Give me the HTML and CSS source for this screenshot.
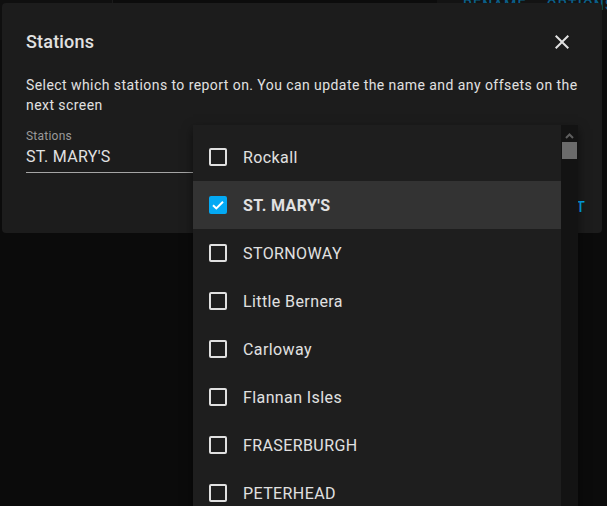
FILE: index.html
```html
<!DOCTYPE html>
<html lang="en">

<head>
    <meta charset="UTF-8" />
    <meta name="viewport" content="width=device-width, initial-scale=1.0" />
    <title>Stations</title>
    <link rel="stylesheet" href="styles.css">
</head>

<body>

    <!-- page behind the dialog, dimmed by the scrim -->
    <div class="page">
        <div class="page-bar">
            <div class="bar-left"></div>
            <div class="bar-mid"></div>
            <div class="bar-right">
                <span class="bar-btn">Rename</span>
                <span class="bar-btn">Options</span>
            </div>
        </div>
    </div>

    <div class="dialog">
        <div class="dialog-head">
            <h2 class="dialog-title">Stations</h2>
            <button class="close-btn" aria-label="Close">
                <svg width="24" height="24" viewBox="0 0 24 24">
                    <path d="M19 6.41 17.59 5 12 10.59 6.41 5 5 6.41 10.59 12 5 17.59 6.41 19 12 13.41 17.59 19 19 17.59 13.41 12z" fill="#e1e1e1" />
                </svg>
            </button>
        </div>
        <p class="dialog-text">Select which stations to report on. You can update the name and any offsets on the next screen</p>

        <div class="field">
            <label class="field-label">Stations</label>
            <div class="field-value">ST. MARY'S</div>
        </div>

        <div class="dialog-actions">
            <button class="text-btn">Next</button>
        </div>
    </div>

    <div class="menu">
        <ul class="menu-list" id="menu-list"></ul>
        <div class="scrollbar">
            <svg class="scroll-up" width="15" height="12" viewBox="0 0 15 12">
                <path d="M4 8 7.5 4.5 11 8" fill="none" stroke="#5e5e5e" stroke-width="2" />
            </svg>
            <div class="scroll-thumb"></div>
        </div>
    </div>

    <script>
        const stations = [
            ["Rockall", false],
            ["ST. MARY'S", true],
            ["STORNOWAY", false],
            ["Little Bernera", false],
            ["Carloway", false],
            ["Flannan Isles", false],
            ["FRASERBURGH", false],
            ["PETERHEAD", false],
            ["Wick", false],
        ];

        const list = document.querySelector("#menu-list");

        const tick = '<svg width="18" height="18" viewBox="0 0 18 18"><path d="M4 9.2 7.3 12.4 14 5.7" fill="none" stroke="#fff" stroke-width="2" /></svg>';

        stations.forEach(([name, checked]) => {
            let li = document.createElement("li");
            li.className = checked ? "item selected" : "item";
            li.innerHTML = `<span class="check">${checked ? tick : ""}</span><span class="item-text"></span>`;
            li.querySelector(".item-text").innerText = name;
            list.appendChild(li);
        });
    </script>

</body>

</html>
```

FILE: styles.css
```css
* {
    margin: 0;
    padding: 0;
    box-sizing: border-box;
}

body {
    width: 607px;
    height: 506px;
    overflow: hidden;
    background-color: #0b0b0b;
    font-family: Roboto, "Noto Sans", sans-serif;
    color: #e1e1e1;
    position: relative;
}

.page-bar {
    display: flex;
    height: 40px;
}

.bar-left {
    width: 113px;
    background-color: #0f0f0f;
    border-right: 1px solid #1a1a1a;
}

.bar-mid {
    flex: 1;
    background-color: #0c0c0c;
}

.bar-right {
    width: 170px;
    background-color: #131313;
    display: flex;
    gap: 20px;
    padding-left: 26px;
}

.bar-btn {
    margin-top: -5px;
    font-size: 14px;
    font-weight: 500;
    letter-spacing: 0.09em;
    text-transform: uppercase;
    color: #0b5f88;
    line-height: 20px;
}

.dialog {
    position: absolute;
    left: 2px;
    top: 3px;
    width: 600px;
    height: 230px;
    background-color: #1c1c1c;
    border-radius: 4px;
    display: flex;
    flex-direction: column;
    padding: 15px 0 0 24px;
}

.dialog-head {
    display: flex;
    align-items: center;
    justify-content: space-between;
    height: 48px;
    padding-right: 16px;
}

.dialog-title {
    font-size: 18px;
    font-weight: 500;
    line-height: 24px;
    letter-spacing: 0.01em;
}

.close-btn {
    width: 48px;
    height: 48px;
    border: none;
    background: none;
    display: flex;
    align-items: center;
    justify-content: center;
}

.dialog-text {
    margin-top: 9px;
    font-size: 14px;
    line-height: 20px;
    width: 560px;
    letter-spacing: 0.031em;
}

.field {
    margin-top: 13px;
    width: 167px;
    border-bottom: 1px solid #a5a5a5;
    padding-bottom: 3px;
}

.field-label {
    display: block;
    font-size: 12px;
    line-height: 16px;
    letter-spacing: 0.02em;
    color: #9a9a9a;
}

.field-value {
    margin-top: 1px;
    font-size: 16px;
    line-height: 24px;
    letter-spacing: 0.02em;
}

.dialog-actions {
    margin-top: auto;
    display: flex;
    justify-content: flex-end;
    padding: 8px;
}

.text-btn {
    height: 36px;
    padding: 0 8px;
    border: none;
    background: none;
    font-family: inherit;
    font-size: 14px;
    font-weight: 500;
    letter-spacing: 0.09em;
    text-transform: uppercase;
    color: #03a9f4;
}

.menu {
    position: absolute;
    left: 193px;
    top: 125px;
    width: 385px;
    height: 420px;
    display: flex;
    background-color: #1e1e1e;
    box-shadow: 0 4px 10px rgba(0, 0, 0, 0.5);
}

.menu-list {
    list-style: none;
    width: 368px;
    padding: 8px 0;
}

.item {
    height: 48px;
    display: flex;
    align-items: center;
    gap: 16px;
    padding-left: 16px;
    font-size: 16px;
    letter-spacing: 0.025em;
    color: #e1e1e1;
}

.item.selected {
    background-color: #333333;
    font-weight: 700;
}

.check {
    width: 18px;
    height: 18px;
    border: 2px solid #e0e0e0;
    border-radius: 2px;
    display: flex;
    align-items: center;
    justify-content: center;
}

.selected .check {
    border-color: #03a9f4;
    background-color: #03a9f4;
}

.check svg {
    flex: none;
}

.scrollbar {
    width: 17px;
    background-color: #131313;
    display: flex;
    flex-direction: column;
    align-items: center;
}

.scroll-up {
    margin-top: 5px;
}

.scroll-thumb {
    width: 15px;
    height: 17px;
    background-color: #6b6b6b;
}
```
